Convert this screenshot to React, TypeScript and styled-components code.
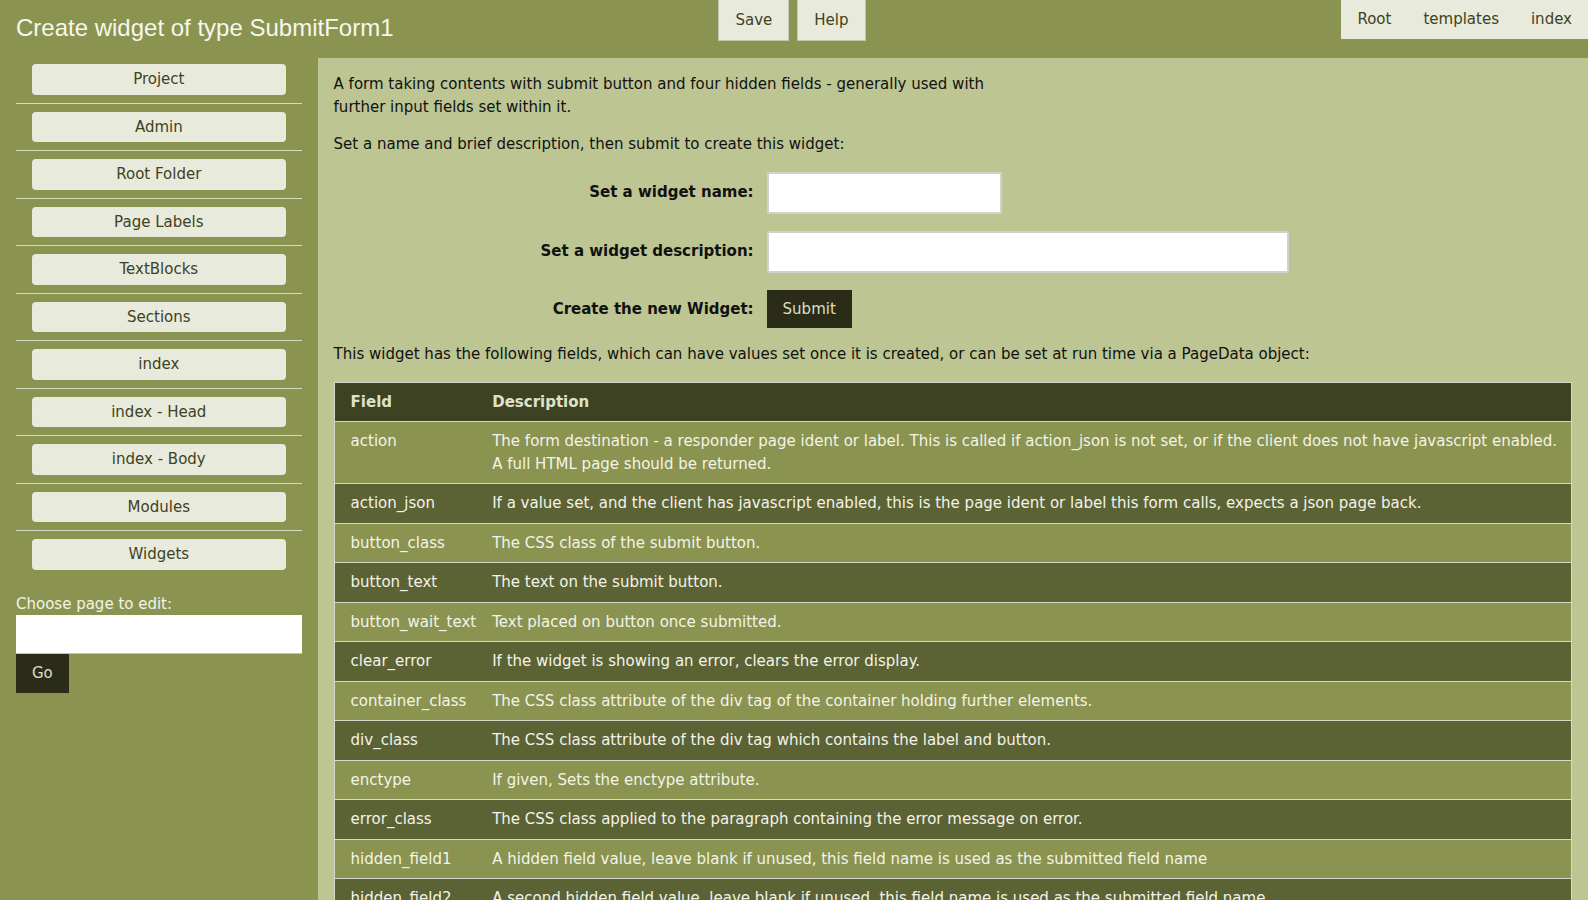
import React from "react";
import styled, { createGlobalStyle } from "styled-components";

const GlobalStyle = createGlobalStyle`
  html, body {
    margin: 0;
    padding: 0;
  }
  body {
    font-family: "DejaVu Sans", "Liberation Sans", sans-serif;
    font-size: 15px;
    line-height: 1.5;
    background: #bdc592;
    color: #111;
  }
  * { box-sizing: border-box; }
`;

const Header = styled.header`
  display: grid;
  grid-template-columns: 1fr auto 1fr;
  height: 58px;
  background: #8a9450;
`;

const Title = styled.h1`
  margin: 0;
  padding: 14px 0 0 16px;
  font-family: "Liberation Sans", Arial, sans-serif;
  font-weight: normal;
  font-size: 24px;
  line-height: 1.2;
  color: #f6f7ee;
  white-space: nowrap;
`;

const TopButtons = styled.div`
  display: flex;
  gap: 8px;
  align-self: start;
  margin-right: 4px;
`;

const TopButton = styled.button`
  font-family: "DejaVu Sans", sans-serif;
  font-size: 15px;
  line-height: 22.5px;
  padding: 8px 16px;
  background: #e8eadb;
  color: #3d4223;
  border: 1px solid #c4c7b6;
  border-top-width: 0;
  height: 41px;
  cursor: pointer;
`;

const TopNav = styled.nav`
  justify-self: end;
  align-self: start;
  display: flex;
  background: #e8eadb;
`;

const TopLink = styled.a`
  display: block;
  padding: 8px 16px;
  line-height: 22.5px;
  color: #3d4223;
  text-decoration: none;
`;

const Layout = styled.div`
  display: grid;
  grid-template-columns: 20% 80%;
  min-height: calc(100vh - 58px);
`;

const Sidebar = styled.aside`
  background: #8a9450;
  padding: 0 16px 16px;
`;

const NavList = styled.ul`
  list-style: none;
  margin: 0;
  padding: 0;
`;

const NavItem = styled.li`
  padding: 8px 16px;
  border-bottom: 1px solid #d6d9c4;
  &:first-child {
    padding-top: 6px;
  }
  &:last-child {
    border-bottom: none;
  }
`;

const NavButton = styled.a`
  display: block;
  text-align: center;
  background: #e8eadb;
  color: #3d4223;
  border-radius: 4px;
  padding: 4px 0;
  line-height: 22.5px;
  text-decoration: none;
`;

const ChooseLabel = styled.label`
  display: block;
  margin-top: 15px;
  color: #f2f3e8;
`;

const ChooseInput = styled.input`
  display: block;
  width: 100%;
  height: 39px;
  border: none;
  border-bottom: 1px solid #c2c4bc;
  background: #fff;
  margin: 0;
`;

const DarkButton = styled.button`
  font-family: "DejaVu Sans", sans-serif;
  font-size: 15px;
  line-height: 22.5px;
  padding: 8px 16px;
  background: #2a2c18;
  color: #dcdfc8;
  border: none;
  cursor: pointer;
`;

const Main = styled.main`
  padding: 15px 16px 16px;
  background: #bdc592;
  min-width: 0;
`;

const Para = styled.p<{ $narrow?: boolean }>`
  margin: 0 0 15px;
  max-width: ${(p) => (p.$narrow ? "680px" : "none")};
`;

const FormGrid = styled.form`
  display: grid;
  grid-template-columns: 420px auto;
  column-gap: 13px;
  row-gap: 17px;
  align-items: center;
  justify-content: start;
  margin: 16px 0 15px;
`;

const FormLabel = styled.label`
  text-align: right;
  font-weight: bold;
`;

const TextInput = styled.input<{ $w: number }>`
  width: ${(p) => p.$w}px;
  height: 42px;
  border: 2px solid #d2d2cc;
  background: #fff;
  margin: 0;
`;

const FieldTable = styled.table`
  width: 100%;
  border-collapse: collapse;
  margin-top: 16px;
  border: 1px solid #d6d8cc;
`;

const HeadCell = styled.th<{ $first?: boolean }>`
  text-align: left;
  padding: ${(p) => (p.$first ? "8px 0 8px 16px" : "8px 12px 8px 16px")};
  background: #3d4223;
  color: #dfe2cb;
  font-weight: bold;
  line-height: 22.5px;
  width: ${(p) => (p.$first ? "1px" : "auto")};
`;

const Row = styled.tr<{ $dark: boolean }>`
  background: ${(p) => (p.$dark ? "#5b6234" : "#8a9450")};
  border-top: 1px solid #d6d8cc;
`;

const Cell = styled.td<{ $first?: boolean }>`
  padding: ${(p) => (p.$first ? "8px 0 8px 16px" : "8px 12px 8px 16px")};
  vertical-align: top;
  color: #f3f3ea;
  line-height: 22.5px;
  white-space: ${(p) => (p.$first ? "nowrap" : "normal")};
`;

const navItems = [
  "Project",
  "Admin",
  "Root Folder",
  "Page Labels",
  "TextBlocks",
  "Sections",
  "index",
  "index - Head",
  "index - Body",
  "Modules",
  "Widgets",
];

const fields: [string, string][] = [
  [
    "action",
    "The form destination - a responder page ident or label. This is called if action_json is not set, or if the client does not have javascript enabled. A full HTML page should be returned.",
  ],
  [
    "action_json",
    "If a value set, and the client has javascript enabled, this is the page ident or label this form calls, expects a json page back.",
  ],
  ["button_class", "The CSS class of the submit button."],
  ["button_text", "The text on the submit button."],
  ["button_wait_text", "Text placed on button once submitted."],
  ["clear_error", "If the widget is showing an error, clears the error display."],
  [
    "container_class",
    "The CSS class attribute of the div tag of the container holding further elements.",
  ],
  ["div_class", "The CSS class attribute of the div tag which contains the label and button."],
  ["enctype", "If given, Sets the enctype attribute."],
  ["error_class", "The CSS class applied to the paragraph containing the error message on error."],
  [
    "hidden_field1",
    "A hidden field value, leave blank if unused, this field name is used as the submitted field name",
  ],
  [
    "hidden_field2",
    "A second hidden field value, leave blank if unused, this field name is used as the submitted field name",
  ],
  [
    "hidden_field3",
    "A third hidden field value, leave blank if unused, this field name is used as the submitted field name",
  ],
  [
    "hidden_field4",
    "A fourth hidden field value, leave blank if unused, this field name is used as the submitted field name",
  ],
];

export default function App() {
  return (
    <>
      <GlobalStyle />
      <Header>
        <Title>Create widget of type SubmitForm1</Title>
        <TopButtons>
          <TopButton>Save</TopButton>
          <TopButton>Help</TopButton>
        </TopButtons>
        <TopNav>
          <TopLink href="#">Root</TopLink>
          <TopLink href="#">templates</TopLink>
          <TopLink href="#">index</TopLink>
        </TopNav>
      </Header>
      <Layout>
        <Sidebar>
          <NavList>
            {navItems.map((n) => (
              <NavItem key={n}>
                <NavButton href="#">{n}</NavButton>
              </NavItem>
            ))}
          </NavList>
          <ChooseLabel>Choose page to edit:</ChooseLabel>
          <ChooseInput type="text" />
          <DarkButton>Go</DarkButton>
        </Sidebar>
        <Main>
          <Para $narrow>
            A form taking contents with submit button and four hidden fields - generally used with
            further input fields set within it.
          </Para>
          <Para>Set a name and brief description, then submit to create this widget:</Para>
          <FormGrid onSubmit={(e) => e.preventDefault()}>
            <FormLabel>Set a widget name:</FormLabel>
            <TextInput $w={235} type="text" />
            <FormLabel>Set a widget description:</FormLabel>
            <TextInput $w={522} type="text" />
            <FormLabel>Create the new Widget:</FormLabel>
            <div>
              <DarkButton type="submit">Submit</DarkButton>
            </div>
          </FormGrid>
          <Para>
            This widget has the following fields, which can have values set once it is created, or
            can be set at run time via a PageData object:
          </Para>
          <FieldTable>
            <thead>
              <tr>
                <HeadCell $first>Field</HeadCell>
                <HeadCell>Description</HeadCell>
              </tr>
            </thead>
            <tbody>
              {fields.map(([f, d], i) => (
                <Row key={f} $dark={i % 2 === 1}>
                  <Cell $first>{f}</Cell>
                  <Cell>{d}</Cell>
                </Row>
              ))}
            </tbody>
          </FieldTable>
        </Main>
      </Layout>
    </>
  );
}
